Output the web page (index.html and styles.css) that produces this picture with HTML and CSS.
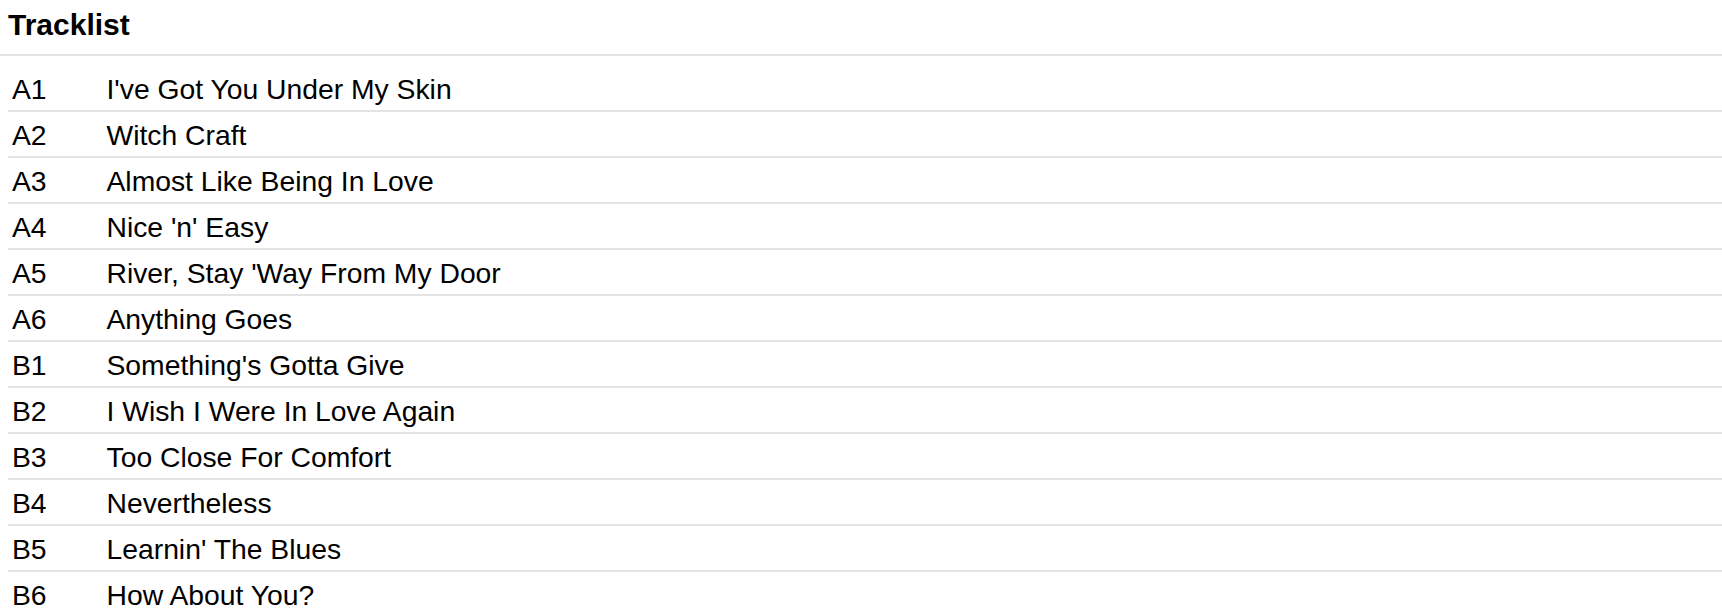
FILE: index.html
```html
<!DOCTYPE html>
<html lang="en">
<head>
<meta charset="utf-8">
<title>Tracklist</title>
<link rel="stylesheet" href="styles.css">
</head>
<body>
<section class="tracklist">
  <h2 class="tracklist-title">Tracklist</h2>
  <ol class="tracks">
    <li class="track"><span class="track-pos">A1</span><span class="track-name">I've Got You Under My Skin</span></li>
    <li class="track"><span class="track-pos">A2</span><span class="track-name">Witch Craft</span></li>
    <li class="track"><span class="track-pos">A3</span><span class="track-name">Almost Like Being In Love</span></li>
    <li class="track"><span class="track-pos">A4</span><span class="track-name">Nice 'n' Easy</span></li>
    <li class="track"><span class="track-pos">A5</span><span class="track-name">River, Stay 'Way From My Door</span></li>
    <li class="track"><span class="track-pos">A6</span><span class="track-name">Anything Goes</span></li>
    <li class="track"><span class="track-pos">B1</span><span class="track-name">Something's Gotta Give</span></li>
    <li class="track"><span class="track-pos">B2</span><span class="track-name">I Wish I Were In Love Again</span></li>
    <li class="track"><span class="track-pos">B3</span><span class="track-name">Too Close For Comfort</span></li>
    <li class="track"><span class="track-pos">B4</span><span class="track-name">Nevertheless</span></li>
    <li class="track"><span class="track-pos">B5</span><span class="track-name">Learnin' The Blues</span></li>
    <li class="track"><span class="track-pos">B6</span><span class="track-name">How About You?</span></li>
  </ol>
</section>
</body>
</html>
```

FILE: styles.css
```css
html, body {
  margin: 0;
  padding: 0;
  background: #ffffff;
}

body {
  font-family: "Liberation Sans", Arial, Helvetica, sans-serif;
  color: #000000;
}

.tracklist {
  padding-top: 8px;
}

.tracklist-title {
  margin: 0;
  padding: 0 8px 13px 8px;
  font-size: 30px;
  line-height: 33px;
  font-weight: bold;
  border-bottom: 2px solid #e4e4e4;
}

.tracks {
  list-style: none;
  margin: 0 0 0 8px;
  padding: 10px 0 0 0;
}

.track {
  display: grid;
  grid-template-columns: 94.5px 1fr;
  padding: 7px 0 5px 4px;
  font-size: 28.3px;
  line-height: 32px;
  border-bottom: 2px solid #e4e4e4;
}

.track-pos,
.track-name {
  white-space: nowrap;
}
```
